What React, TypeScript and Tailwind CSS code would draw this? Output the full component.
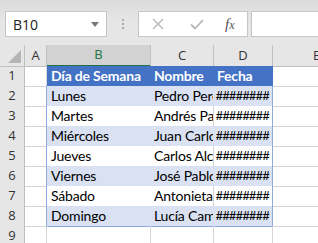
import React from 'react';

const rows = [
  { day: 'Lunes', name: 'Pedro Perez' },
  { day: 'Martes', name: 'Andrés Paz' },
  { day: 'Miércoles', name: 'Juan Carlos' },
  { day: 'Jueves', name: 'Carlos Alcalá' },
  { day: 'Viernes', name: 'José Pablo' },
  { day: 'Sábado', name: 'Antonieta' },
  { day: 'Domingo', name: 'Lucía Campos' },
];

const cellFont = { fontFamily: 'Lato, "Liberation Sans", sans-serif' };
const uiFont = { fontFamily: '"Open Sans", "Noto Sans", sans-serif' };

function FormulaBar() {
  return (
    <div className="h-[45px] bg-gradient-to-b from-[#dcdcdc] via-[#e6e6e6] to-[#e6e6e6] to-[20%] flex items-start pt-[11px] pl-[5px]">
      {/* Name box */}
      <div className="w-[102px] h-[26px] bg-white border border-[#c6c6c6] flex items-center justify-between pl-[7px] pr-[7px]">
        <span className="text-[14px] text-[#222]" style={uiFont}>B10</span>
        <svg width="8" height="5" viewBox="0 0 8 5"><path d="M0 0h8L4 5z" fill="#777" /></svg>
      </div>
      {/* Separator dots */}
      <div className="w-[31px] h-[26px] flex flex-col items-center justify-center gap-[2px]">
        <span className="block w-[2px] h-[2px] bg-[#aaa]" />
        <span className="block w-[2px] h-[2px] bg-[#aaa]" />
        <span className="block w-[2px] h-[2px] bg-[#aaa]" />
      </div>
      {/* Cancel / enter / fx */}
      <div className="w-[110px] h-[26px] bg-white border border-[#c6c6c6] flex items-center">
        <svg className="ml-[13px]" width="12" height="12" viewBox="0 0 12 12">
          <path d="M1 1l10 10M11 1L1 11" stroke="#b8b8b8" strokeWidth="1.4" />
        </svg>
        <svg className="ml-[26px]" width="14" height="11" viewBox="0 0 14 11">
          <path d="M1 5.5l4 4L13 1" stroke="#b8b8b8" strokeWidth="1.8" fill="none" />
        </svg>
        <span
          className="ml-[21px] text-[15px] italic text-[#555]"
          style={{ fontFamily: '"Liberation Serif", serif' }}
        >
          f<span className="text-[12px]">x</span>
        </span>
      </div>
      {/* Formula input */}
      <div className="ml-[3px] flex-1 h-[26px] bg-white border border-r-0 border-[#c6c6c6]" />
    </div>
  );
}

const textCell = 'text-[14px] tracking-[-0.2px] flex items-center whitespace-nowrap overflow-hidden';

export default function App() {
  const cols = ['A', 'B', 'C', 'D', 'E'];
  // E column is wider than the window, so its label sits at the right edge
  const grid = 'grid w-[361px] grid-cols-[25px_22px_104px_63px_59px_88px]';

  return (
    <div className="w-[318px] h-[243px] overflow-hidden bg-white">
      <FormulaBar />

      {/* Column headers */}
      <div className={`${grid} h-[21px] bg-[#e6e6e6]`} style={uiFont}>
        <div className="relative border-r border-b border-[#c0c0c0]">
          <svg className="absolute right-[3px] bottom-[3px]" width="13" height="13" viewBox="0 0 13 13">
            <path d="M13 0V13H0z" fill="#b4b4b4" />
          </svg>
        </div>
        {cols.map((c) => (
          <div
            key={c}
            className={
              c === 'B'
                ? 'flex items-center justify-center text-[13px] text-[#217346] bg-[#d2d2d2] border-r border-[#c0c0c0] border-b-2 border-b-[#217346]'
                : 'flex items-center justify-center text-[13px] text-[#333] border-r border-b border-[#c0c0c0]'
            }
          >
            {c}
          </div>
        ))}
      </div>

      {/* Table header row */}
      <div className={`${grid} h-[20px]`} style={cellFont}>
        <div className="flex items-center justify-center text-[13px] text-[#333] bg-[#e6e6e6] border-r border-b border-[#c0c0c0]" style={uiFont}>
          1
        </div>
        <div className="border-r border-b border-[#d4d4d4]" />
        <div className={`${textCell} bg-[#4472c4] text-white font-bold pl-[4px] border-b border-[#8ea9db]`}>
          Día de Semana
        </div>
        <div className={`${textCell} bg-[#4472c4] text-white font-bold pl-[3px] border-b border-[#8ea9db]`}>
          Nombre
        </div>
        <div className={`${textCell} bg-[#4472c4] text-white font-bold pl-[3px] border-b border-[#8ea9db] border-r border-r-[#4472c4]`}>
          Fecha
        </div>
        <div className="border-r border-b border-[#d4d4d4]" />
      </div>

      {/* Data rows */}
      {rows.map((r, i) => {
        const banded = i % 2 === 0;
        const fill = banded ? 'bg-[#d9e1f2]' : 'bg-white';
        return (
          <div key={r.day} className={`${grid} h-[20px]`} style={cellFont}>
            <div className="flex items-center justify-center text-[13px] text-[#333] bg-[#e6e6e6] border-r border-b border-[#c0c0c0]" style={uiFont}>
              {i + 2}
            </div>
            <div className="border-r border-[#8ea9db] border-b border-b-[#d4d4d4]" />
            <div className={`${textCell} ${fill} text-black pl-[4px] border-b border-[#8ea9db]`}>
              {r.day}
            </div>
            <div className={`${textCell} ${fill} text-black pl-[3px] border-b border-[#8ea9db] border-r ${banded ? 'border-r-[#d9e1f2]' : 'border-r-[#d4d4d4]'}`}>
              <span className="block overflow-hidden">{r.name}</span>
            </div>
            <div
              className={`${fill} text-black text-[12px] font-bold pl-[2px] flex items-center whitespace-nowrap overflow-hidden border-b border-[#8ea9db] border-r border-r-[#8ea9db]`}
              style={{ fontFamily: '"Liberation Sans", sans-serif' }}
            >
              ########
            </div>
            <div className="border-r border-b border-[#d4d4d4]" />
          </div>
        );
      })}

      {/* Empty row 9 */}
      <div className={`${grid} h-[20px]`}>
        <div className="flex items-center justify-center text-[13px] text-[#333] bg-[#e6e6e6] border-r border-b border-[#c0c0c0]" style={uiFont}>
          9
        </div>
        {[0, 1, 2, 3, 4].map((k) => (
          <div key={k} className="border-r border-b border-[#d4d4d4]" />
        ))}
      </div>
    </div>
  );
}
